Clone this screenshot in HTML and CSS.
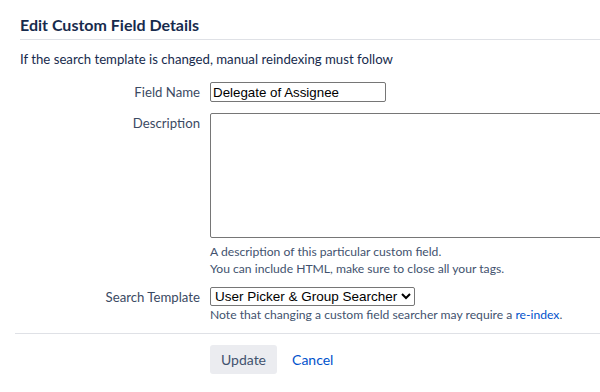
FILE: index.html
```html
<!DOCTYPE html>
<html lang="en">
<head>
  <meta charset="UTF-8">
  <title>Edit Custom Field Details</title>
  <link rel="stylesheet" href="styles.css">
</head>
<body>
  <div class="page">
    <h2 class="page-title">Edit Custom Field Details</h2>
    <p class="intro">If the search template is changed, manual reindexing must follow</p>

    <form class="field-form">
      <div class="field-row">
        <label class="field-label" for="field-name">Field Name</label>
        <div class="field-control">
          <input id="field-name" class="text-input" type="text" value="Delegate of Assignee">
        </div>
      </div>

      <div class="field-row">
        <label class="field-label" for="description">Description</label>
        <div class="field-control">
          <textarea id="description" class="textarea"></textarea>
          <div class="help">A description of this particular custom field.</div>
          <div class="help">You can include HTML, make sure to close all your tags.</div>
        </div>
      </div>

      <div class="field-row">
        <label class="field-label" for="search-template">Search Template</label>
        <div class="field-control">
          <select id="search-template" class="select">
            <option>User Picker &amp; Group Searcher</option>
          </select>
          <div class="help">Note that changing a custom field searcher may require a <a href="#">re-index</a>.</div>
        </div>
      </div>

      <div class="buttons">
        <button type="button" class="btn">Update</button>
        <a href="#" class="cancel">Cancel</a>
      </div>
    </form>
  </div>
</body>
</html>
```

FILE: styles.css
```css
body {
  margin: 0;
  font-family: Lato, "Open Sans", sans-serif;
  font-size: 13.2px;
  color: #172b4d;
  background: #fff;
}

.page {
  padding-left: 15px;
  overflow: hidden;
  height: 392px;
}

.page-title {
  margin: 15px 0 0 5px;
  padding-bottom: 4px;
  font-size: 16px;
  font-weight: 700;
  line-height: 20px;
  border-bottom: 1px solid #dfe1e6;
}

.intro {
  margin: 9px 0 0 5px;
  line-height: 20px;
}

.field-form {
  margin-top: 13px;
}

.field-row {
  display: grid;
  grid-template-columns: 185px 1fr;
  column-gap: 10px;
  margin-bottom: 11px;
}

.field-row + .field-row + .field-row {
  margin-top: -1px;
  margin-bottom: 0;
}

.field-label {
  text-align: right;
  color: #3b4a63;
  line-height: 20px;
}

.text-input {
  display: block;
  width: 176px;
  height: 20px;
  box-sizing: border-box;
  border: 1px solid #767676;
  border-radius: 2px;
  padding: 1px 2px;
  font-family: "Liberation Sans", Arial, sans-serif;
  font-size: 13.33px;
  color: #000;
}

.textarea {
  display: block;
  width: 500px;
  height: 125px;
  box-sizing: border-box;
  border: 1px solid #767676;
  border-radius: 2px;
  resize: none;
  margin-bottom: 5px;
}

.select {
  display: block;
  height: 19px;
  border: 1px solid #767676;
  border-radius: 2px;
  font-family: "Liberation Sans", Arial, sans-serif;
  font-size: 13.5px;
  color: #000;
  background: #fff;
}

.help {
  font-size: 12.15px;
  line-height: 17px;
  color: #42526e;
}

.help a {
  color: #0052cc;
  text-decoration: none;
}

.buttons {
  border-top: 1px solid #dfe1e6;
  margin-top: 10px;
  padding: 11px 0 0 195px;
  display: flex;
  align-items: center;
  gap: 15px;
}

.btn {
  height: 29px;
  padding: 0 11px;
  border: none;
  border-radius: 3px;
  background: #ebecf0;
  color: #42526e;
  font-family: inherit;
  font-size: 14px;
}

.cancel {
  color: #0052cc;
  font-size: 14px;
  text-decoration: none;
}
```
